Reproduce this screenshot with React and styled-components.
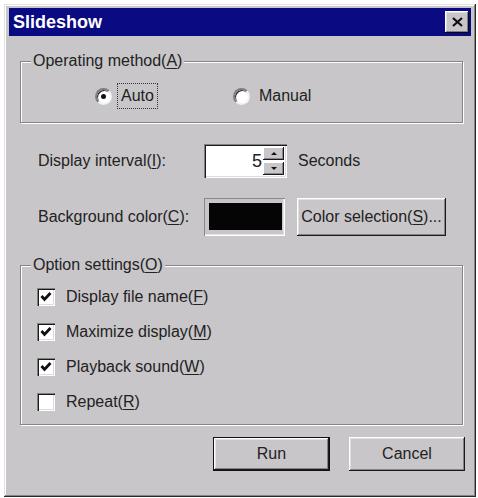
import React from "react";
import styled, { createGlobalStyle } from "styled-components";

const FACE = "#c8c6c9";
const INK = "#222222";

const GlobalStyle = createGlobalStyle`
  html, body {
    margin: 0;
    padding: 0;
    background: #ffffff;
  }
  body {
    font-family: "Liberation Sans", Arial, sans-serif;
    color: ${INK};
  }
  * {
    box-sizing: border-box;
  }
`;

const Radio = ({ label, checked, focused }) => (
  <RadioItem>
    <RadioCircle $checked={checked} />
    <Caption $focused={focused}>{label}</Caption>
  </RadioItem>
);

const Check = ({ checked, children }) => (
  <CheckRow>
    <CheckBox>
      {checked && (
        <svg width="12" height="12" viewBox="0 0 12 12">
          <path d="M1.5 5 L4.5 8.5 L10.5 2" fill="none" stroke="#111" strokeWidth="2.8" />
        </svg>
      )}
    </CheckBox>
    <span>{children}</span>
  </CheckRow>
);

export default function App() {
  return (
    <>
      <GlobalStyle />
      <Window>
        <TitleBar>
          <Title>Slideshow</Title>
          <CloseButton aria-label="Close">
            <svg width="11" height="10" viewBox="0 0 11 10">
              <path d="M1 1 L10 9 M10 1 L1 9" stroke="#111" strokeWidth="2.2" />
            </svg>
          </CloseButton>
        </TitleBar>
        <Body>
          <GroupBox>
            <Legend>
              Operating method(<Key>A</Key>)
            </Legend>
            <RadioRow>
              <Radio label="Auto" checked focused />
              <Radio label="Manual" />
            </RadioRow>
          </GroupBox>

          <FieldRow $top={21}>
            <FieldLabel>
              Display interval(<Key>I</Key>):
            </FieldLabel>
            <SpinBox>
              <SpinValue>5</SpinValue>
              <SpinButtons>
                <SpinButton>
                  <Arrow $up />
                </SpinButton>
                <SpinButton>
                  <Arrow />
                </SpinButton>
              </SpinButtons>
            </SpinBox>
            <Unit>Seconds</Unit>
          </FieldRow>

          <FieldRow $top={20}>
            <FieldLabel>
              Background color(<Key>C</Key>):
            </FieldLabel>
            <Swatch>
              <SwatchFill $color="#050505" />
            </Swatch>
            <Button $width={149} $height={38} $gap={12}>
              Color selection(<Key>S</Key>)...
            </Button>
          </FieldRow>

          <GroupBox $top={19}>
            <Legend>
              Option settings(<Key>O</Key>)
            </Legend>
            <CheckList>
              <Check checked>
                Display file name(<Key>F</Key>)
              </Check>
              <Check checked>
                Maximize display(<Key>M</Key>)
              </Check>
              <Check checked>
                Playback sound(<Key>W</Key>)
              </Check>
              <Check>
                Repeat(<Key>R</Key>)
              </Check>
            </CheckList>
          </GroupBox>

          <ButtonRow>
            <Button $width={117} $height={34} $default>
              Run
            </Button>
            <Button $width={116} $height={34}>
              Cancel
            </Button>
          </ButtonRow>
        </Body>
      </Window>
    </>
  );
}

const Window = styled.div`
  width: 472px;
  height: 493px;
  margin: 4px 0 0 4px;
  padding: 4px 5px 0;
  background: ${FACE};
  box-shadow: inset -1px -1px #2a2a2a, inset 1px 1px #e2e0e3,
    inset -2px -2px #858386, inset 2px 2px #ffffff;
  display: flex;
  flex-direction: column;
`;

const TitleBar = styled.div`
  height: 28px;
  background: #0a0a82;
  display: flex;
  align-items: center;
  justify-content: space-between;
  padding: 0 2px 0 4px;
`;

const Title = styled.span`
  color: #ffffff;
  font-weight: 700;
  font-size: 18px;
  line-height: 20px;
`;

const CloseButton = styled.button`
  width: 24px;
  height: 22px;
  margin-top: -1px;
  padding: 0;
  border: none;
  background: ${FACE};
  display: flex;
  align-items: center;
  justify-content: center;
  box-shadow: inset -1px -1px #0a0a0a, inset 1px 1px #ffffff,
    inset -2px -2px #808080, inset 2px 2px #e0dee1;
`;

const Body = styled.div`
  display: flex;
  flex-direction: column;
  padding: 15px 8px 0 11px;
  font-size: 16px;
`;

const Key = styled.span`
  text-decoration: underline;
  text-underline-offset: 2px;
`;

const GroupBox = styled.fieldset`
  margin: ${(p) => p.$top || 0}px 0 0;
  padding: 0;
  min-width: 0;
  border: 1px solid #868488;
  box-shadow: inset 1px 1px #ffffff, 1px 1px #ffffff;
`;

const Legend = styled.legend`
  margin-left: 10px;
  padding: 0 2px;
  font-size: 16px;
  line-height: 20px;
  background: ${FACE};
`;

const RadioRow = styled.div`
  display: flex;
  align-items: center;
  gap: 75px;
  height: 51px;
  padding: 13px 0 14px 74px;
`;

const RadioItem = styled.label`
  display: flex;
  align-items: center;
  gap: 5px;
`;

const RadioCircle = styled.span`
  width: 17px;
  height: 17px;
  border-radius: 50%;
  background: #ffffff;
  border: 2px solid;
  border-color: #7e7c80 #f2f2f2 #f2f2f2 #7e7c80;
  box-shadow: inset 1px 1px #2a2a2a;
  display: flex;
  align-items: center;
  justify-content: center;
  &::after {
    content: "";
    width: 5px;
    height: 5px;
    border-radius: 50%;
    background: ${(p) => (p.$checked ? "#111111" : "transparent")};
  }
`;

const Caption = styled.span`
  padding: 1px 3px;
  line-height: 22px;
  border: 1px dotted ${(p) => (p.$focused ? "#333333" : "transparent")};
`;

const FieldRow = styled.div`
  display: flex;
  align-items: center;
  margin-top: ${(p) => p.$top}px;
  padding-left: 18px;
`;

const FieldLabel = styled.span`
  width: 166px;
  flex-shrink: 0;
`;

const SpinBox = styled.div`
  width: 83px;
  height: 34px;
  background: #ffffff;
  display: flex;
  align-items: center;
  padding: 3px 3px 3px 2px;
  box-shadow: inset 1px 1px #808080, inset 2px 2px #1a1a1a,
    inset -1px -1px #ffffff, inset -2px -2px #dcdadd;
`;

const SpinValue = styled.span`
  flex: 1;
  text-align: right;
  padding-right: 1px;
  font-size: 18px;
`;

const SpinButtons = styled.div`
  width: 21px;
  height: 28px;
  display: flex;
  flex-direction: column;
  gap: 2px;
`;

const SpinButton = styled.div`
  flex: 1;
  background: ${FACE};
  display: flex;
  align-items: center;
  justify-content: center;
  box-shadow: inset -1px -1px #1a1a1a, inset 1px 1px #ffffff,
    inset -2px -2px #8a888c;
`;

const Arrow = styled.span`
  width: 0;
  height: 0;
  border-left: 3px solid transparent;
  border-right: 3px solid transparent;
  ${(p) =>
    p.$up ? "border-bottom: 3px solid #111;" : "border-top: 3px solid #111;"}
`;

const Unit = styled.span`
  margin-left: 11px;
`;

const Swatch = styled.div`
  width: 81px;
  height: 38px;
  padding: 5px 3px 6px 5px;
  box-shadow: inset 1px 1px #8a888c, inset -1px -1px #ffffff,
    inset -2px -2px #e4e2e5;
`;

const SwatchFill = styled.div`
  height: 100%;
  background: ${(p) => p.$color};
`;

const Button = styled.button`
  width: ${(p) => p.$width}px;
  height: ${(p) => p.$height}px;
  margin-left: ${(p) => p.$gap || 0}px;
  padding: 0;
  font-family: "Liberation Sans", Arial, sans-serif;
  font-size: 16px;
  color: ${INK};
  background: ${FACE};
  border: ${(p) => (p.$default ? "1px solid #111111" : "none")};
  box-shadow: inset -1px -1px #1a1a1a, inset 1px 1px #ffffff,
    inset -2px -2px #858386, inset 2px 2px #e2e0e3;
`;

const CheckList = styled.div`
  display: flex;
  flex-direction: column;
  padding: 4px 0 5px 16px;
`;

const CheckRow = styled.label`
  height: 35px;
  display: flex;
  align-items: center;
  gap: 11px;
`;

const CheckBox = styled.span`
  width: 18px;
  height: 18px;
  background: #ffffff;
  display: flex;
  align-items: center;
  justify-content: center;
  box-shadow: inset 1px 1px #808080, inset 2px 2px #1a1a1a,
    inset -1px -1px #ffffff, inset -2px -2px #dcdadd;
`;

const ButtonRow = styled.div`
  display: flex;
  justify-content: flex-end;
  gap: 19px;
  margin: 12px -2px 0 0;
`;
